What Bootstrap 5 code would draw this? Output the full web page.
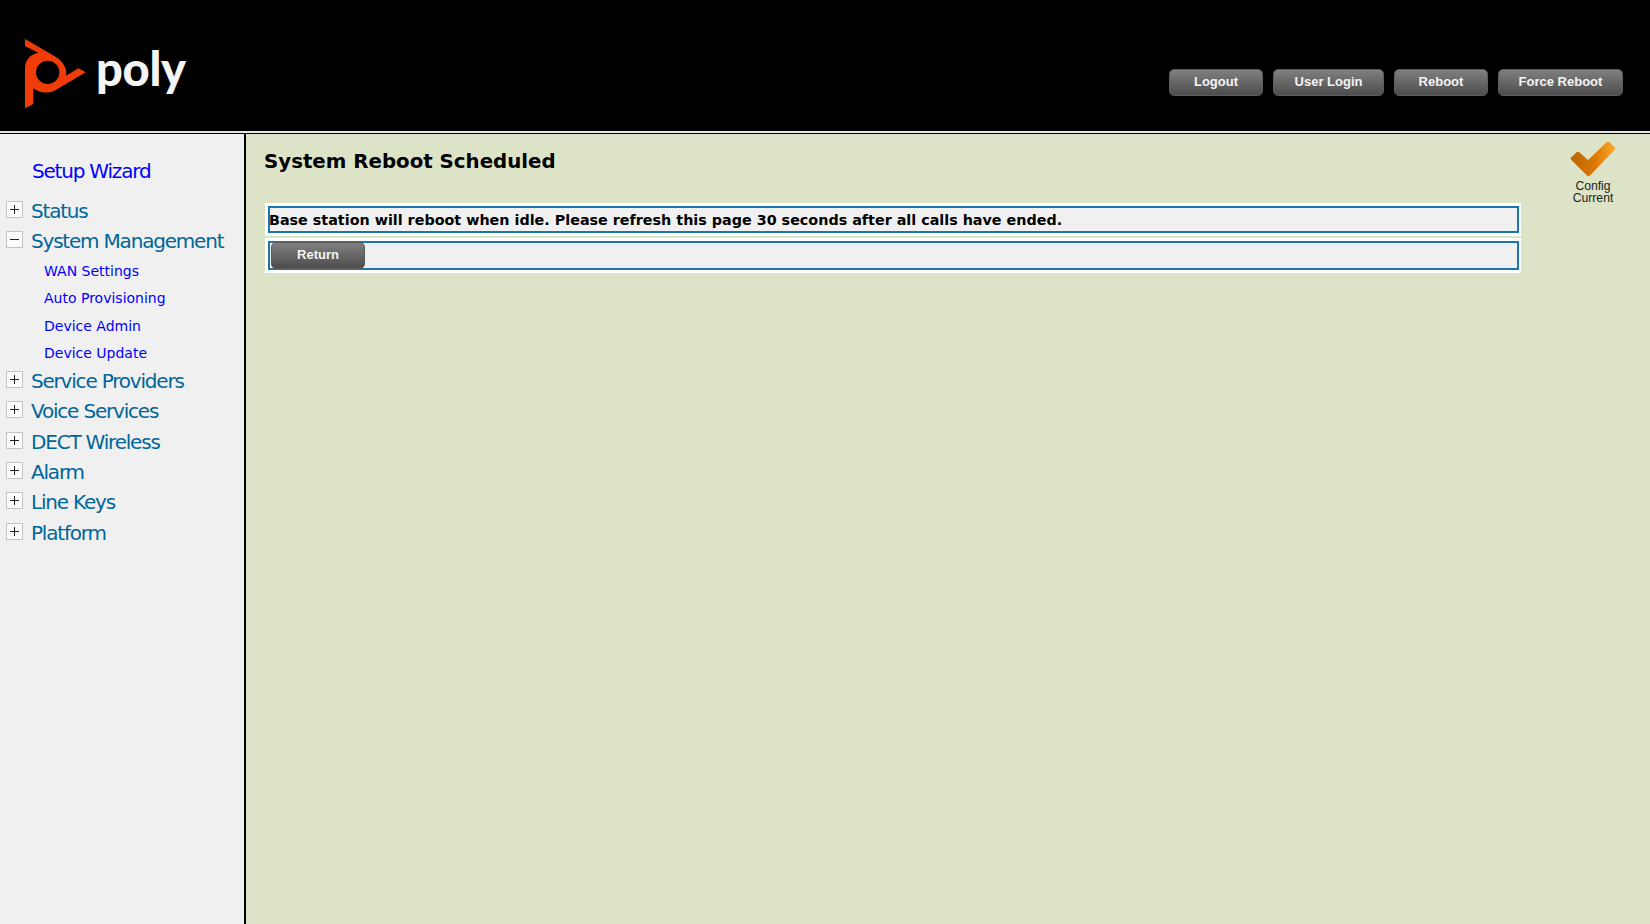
<!DOCTYPE html>
<html lang="en">
<head>
<meta charset="utf-8">
<title>System Reboot Scheduled</title>
<link href="https://cdn.jsdelivr.net/npm/bootstrap@5.3.0/dist/css/bootstrap.min.css" rel="stylesheet">
<style>
html,body{height:100%;}
body{background:#dde3c6;overflow:hidden;font-family:"DejaVu Sans",Verdana,sans-serif;color:#000;}
.shell{height:924px;display:flex;flex-direction:column;}
.topbar{height:131px;background:#000;flex:none;display:flex;align-items:flex-start;justify-content:space-between;}
.topline{height:3px;flex:none;background:#000;border-top:2px solid #e4e4e4;}
.brand{padding:30px 0 0 15px;display:flex;align-items:flex-start;}
.brand svg{display:block;}
.wordmark{font-family:Lato,"Open Sans",sans-serif;font-weight:900;font-size:47px;line-height:1;color:#f4f4f4;margin:15px 0 0 1px;letter-spacing:-.3px;}
.actions{display:flex;gap:10px;padding:69px 27px 0 0;}
.hw-btn{height:27px;padding:0;border:1px solid #5c5c5c;border-radius:5px;background:linear-gradient(#808080,#4c4c4c);color:#f4f4f4;font-family:"Liberation Sans",Arial,sans-serif;font-weight:700;font-size:13px;line-height:19px;text-align:center;display:block;}
.hw-btn.w94,.hw-btn.w111,.hw-btn.w125{padding-bottom:2px;}
.w94{width:94px}.w111{width:111px}.w125{width:125px}
.body-wrap{flex:1;display:flex;min-height:0;}
.sidenav{width:246px;flex:none;background:#f0f0f0;border-right:2px solid #000;padding-top:22px;}
.nav-top{font-size:20px;line-height:30px;letter-spacing:-1.2px;color:#0000ff;text-decoration:none;display:block;margin:0 0 0 32px;height:40px;}
.nav-row{display:flex;align-items:center;height:30.3px;}
.nav-row a{font-size:20px;letter-spacing:-1.2px;color:#006699;text-decoration:none;line-height:30px;margin-left:8px;}
.tog{width:17px;height:17px;margin-left:6px;background:#fbfbfb;border:1px solid #c4c4c4;position:relative;flex:none;margin-top:-3px;}
.tog::before{content:"";position:absolute;left:3px;right:3px;top:7px;height:1px;background:#222;}
.tog.plus::after{content:"";position:absolute;top:3px;bottom:3px;left:7px;width:1px;background:#222;}
.sub-list{margin:0 0 -1px;padding:0 0 0 44px;list-style:none;}
.sub-list li{height:27.6px;line-height:27px;}
.sub-list a{font-size:14px;color:#0000ff;text-decoration:none;}
.main-area{flex:1;position:relative;padding:13px 0 0 18px;min-width:0;}
.page-title{font-size:19.8px;font-weight:700;line-height:30px;margin:0 0 26px;}
.panel-outer{width:1256px;background:#fff;padding:3px 2px 3px 3px;margin-left:1px;}
.panel-inner{background:#f0f0f0;border:2px solid #1b75b0;}
.msg{font-size:14.33px;font-weight:700;height:27px;line-height:25px;text-indent:-1px;white-space:nowrap;}
.gap-panel{margin-top:2px;}
.act{height:29px;padding:0 0 0 1px;}
.act .hw-btn{margin-top:-1px;}
.config{position:absolute;top:7px;right:23px;width:68px;text-align:center;color:#222;font-family:"Liberation Sans",Arial,sans-serif;font-size:12.2px;line-height:12px;}
.config svg{display:block;margin:0 auto 3px;}
</style>
</head>
<body>
<div class="shell">
  <header class="topbar">
    <div class="brand">
      <svg width="80" height="80" viewBox="0 0 240 240" aria-label="Poly logo">
        <path fill="#f23c08" fill-rule="evenodd" d="M30 27 L118 78 C145 93 158 118 153 137 L190 115 L212 127 L122 180 C100 192 75 190 55 175 L55 222 L30 235 L30 110 C32 88 48 72 70 68 L30 48 Z M98 92 A35 35 0 1 0 98.100 162 A35 35 0 1 0 98 92 Z"/>
      </svg>
      <span class="wordmark">poly</span>
    </div>
    <div class="actions">
      <button type="button" class="hw-btn w94">Logout</button>
      <button type="button" class="hw-btn w111">User Login</button>
      <button type="button" class="hw-btn w94">Reboot</button>
      <button type="button" class="hw-btn w125">Force Reboot</button>
    </div>
  </header>
  <div class="topline"></div>
  <div class="body-wrap">
    <nav class="sidenav">
      <a class="nav-top" href="#">Setup Wizard</a>
      <div class="nav-row"><span class="tog plus"></span><a href="#">Status</a></div>
      <div class="nav-row"><span class="tog"></span><a href="#">System Management</a></div>
      <ul class="sub-list">
        <li><a href="#">WAN Settings</a></li>
        <li><a href="#">Auto Provisioning</a></li>
        <li><a href="#">Device Admin</a></li>
        <li><a href="#">Device Update</a></li>
      </ul>
      <div class="nav-row"><span class="tog plus"></span><a href="#">Service Providers</a></div>
      <div class="nav-row"><span class="tog plus"></span><a href="#">Voice Services</a></div>
      <div class="nav-row"><span class="tog plus"></span><a href="#">DECT Wireless</a></div>
      <div class="nav-row"><span class="tog plus"></span><a href="#">Alarm</a></div>
      <div class="nav-row"><span class="tog plus"></span><a href="#">Line Keys</a></div>
      <div class="nav-row"><span class="tog plus"></span><a href="#">Platform</a></div>
    </nav>
    <main class="main-area">
      <h1 class="page-title">System Reboot Scheduled</h1>
      <div class="panel-outer"><div class="panel-inner msg">Base station will reboot when idle. Please refresh this page 30 seconds after all calls have ended.</div></div>
      <div class="panel-outer gap-panel"><div class="panel-inner act"><button type="button" class="hw-btn w94">Return</button></div></div>
      <div class="config">
        <svg width="46" height="36" viewBox="0 0 46 36"><defs><linearGradient id="chk" x1="0" y1="0" x2="1" y2="0"><stop offset="0" stop-color="#b86505"/><stop offset=".55" stop-color="#dc7a04"/><stop offset="1" stop-color="#fda92c"/></linearGradient></defs><path fill="url(#chk)" d="M1 16.500 L7 11 Q8 10 9 11 L18 19 L37 1 Q38 0 39 1 L45 6.500 Q46 7.500 45 8.500 L20 34.500 Q18.500 36 17 34.500 L1 18.500 Q0 17.500 1 16.500 Z"/></svg>
        <div>Config<br>Current</div>
      </div>
    </main>
  </div>
</div>
<script src="https://cdn.jsdelivr.net/npm/bootstrap@5.3.0/dist/js/bootstrap.bundle.min.js"></script>
</body>
</html>
